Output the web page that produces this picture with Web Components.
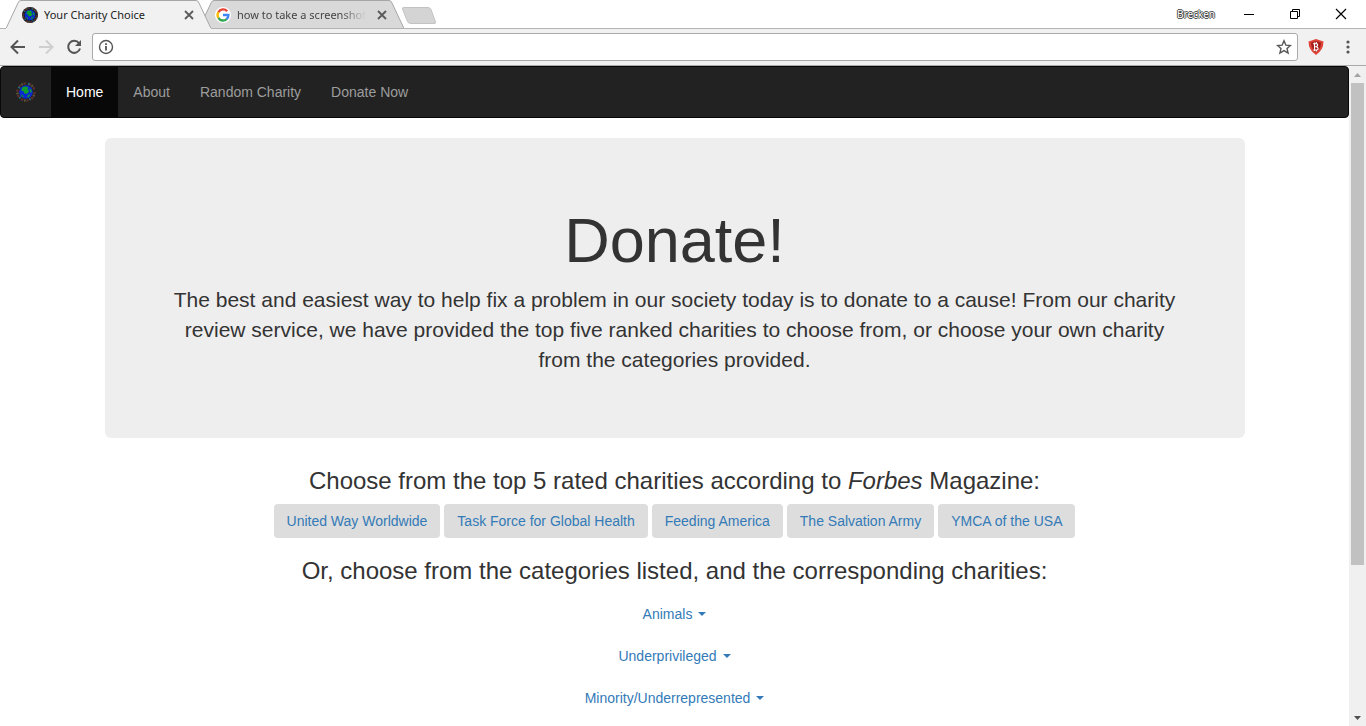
<!DOCTYPE html>
<html lang="en">
<head>
<meta charset="utf-8">
<title>Your Charity Choice</title>
<style>
html, body { margin: 0; height: 100%; }
body { overflow: hidden; background: #fff; }
em { font-style: italic; }
</style>
</head>
<body>
<browser-window>
  <browser-tab slot="tab" label="Your Charity Choice" active>
    <globe-icon></globe-icon>
  </browser-tab>
  <browser-tab slot="tab" label="how to take a screenshot">
    <google-icon></google-icon>
  </browser-tab>
  <browser-toolbar slot="toolbar"></browser-toolbar>

  <site-nav>
    <site-link href="#brand" brand><globe-icon large></globe-icon></site-link>
    <site-link href="#home" active>Home</site-link>
    <site-link href="#about">About</site-link>
    <site-link href="#random">Random Charity</site-link>
    <site-link href="#donate">Donate Now</site-link>
  </site-nav>
  <site-container>
    <site-jumbotron>
      <span slot="title">Donate!</span>
      The best and easiest way to help fix a problem in our society today is to donate to a cause! From our charity review service, we have provided the top five ranked charities to choose from, or choose your own charity from the categories provided.
    </site-jumbotron>
    <charity-section>
      <span slot="title">Choose from the top 5 rated charities according to <em>Forbes</em> Magazine:</span>
      <charity-link href="#united-way">United Way Worldwide</charity-link>
      <charity-link href="#task-force">Task Force for Global Health</charity-link>
      <charity-link href="#feeding-america">Feeding America</charity-link>
      <charity-link href="#salvation-army">The Salvation Army</charity-link>
      <charity-link href="#ymca">YMCA of the USA</charity-link>
    </charity-section>
    <charity-section stacked>
      <span slot="title">Or, choose from the categories listed, and the corresponding charities:</span>
      <category-menu>Animals</category-menu>
      <category-menu>Underprivileged</category-menu>
      <category-menu>Minority/Underrepresented</category-menu>
    </charity-section>
  </site-container>
</browser-window>

<script>
function define(name, html) {
  const template = document.createElement('template');
  template.innerHTML = html;
  customElements.define(name, class extends HTMLElement {
    constructor() {
      super();
      this.attachShadow({ mode: 'open' }).append(template.content.cloneNode(true));
    }
    connectedCallback() {
      const link = this.shadowRoot.querySelector('a');
      if (link && this.hasAttribute('href')) link.href = this.getAttribute('href');
      const label = this.shadowRoot.querySelector('.label');
      if (label && this.hasAttribute('label')) label.textContent = this.getAttribute('label');
    }
  });
}

define('globe-icon', `
<style>
:host { display: block; width: 16px; height: 16px; }
:host([large]) { width: 20px; height: 20px; }
svg { display: block; width: 100%; height: 100%; }
.halo { fill: #15191c; }
:host([large]) .halo { fill: none; }
</style>
<svg viewBox="0 0 20 20" aria-hidden="true">
  <circle class="halo" cx="10" cy="10" r="10"/>
  <g fill="none" stroke-width="2.4">
    <circle cx="10" cy="10" r="8.600" stroke="#5a2f2c" stroke-dasharray="2.400 3"/>
    <circle cx="10" cy="10" r="8.600" stroke="#5e5a3c" stroke-dasharray="1.600 9.200" stroke-dashoffset="-3"/>
    <circle cx="10" cy="10" r="8.200" stroke="#22707c" stroke-dasharray="1.400 9.400" stroke-dashoffset="-8"/>
  </g>
  <circle cx="10" cy="10" r="6.800" fill="#0a2ad0"/>
  <path d="M6 6Q7 4 10 4.500L12.500 5.500 11.500 7 13 9 12 11 9.500 12 8 11 7.500 9 5.500 9ZM13.500 6 15.500 8V11L14 10ZM12 13 14 12 13 15 11 15.500ZM5 12 7 13.500 7.500 15.500 6 14.500Z" fill="#0fa02c"/>
</svg>`);

define('google-icon', `
<style>
:host { display: block; width: 16px; height: 16px; background: #fff; border-radius: 50%; }
svg { display: block; }
</style>
<svg width="16" height="16" viewBox="0 0 16 16" fill="none" stroke-width="2.400" aria-hidden="true">
  <path d="M12.200 4.200A5.400 5.400 0 0 0 3.400 5.200" stroke="#ea4335"/>
  <path d="M3.400 5.200a5.400 5.400 0 0 0 0 5.600" stroke="#fbbc05"/>
  <path d="M3.400 10.800a5.400 5.400 0 0 0 8.400 1.200" stroke="#34a853"/>
  <path d="M11.600 12.200A5.400 5.400 0 0 0 13.400 8H8" stroke="#4285f4"/>
</svg>`);

define('browser-window', `
<style>
:host { display: flex; flex-direction: column; height: 100vh; font: 11px/16px "Noto Sans", "Open Sans", sans-serif; }
header { background: #f1f1f1; border-bottom: 1px solid #a9a9a9; }
.strip { display: flex; justify-content: space-between; height: 28px; background: #fff; border-bottom: 1px solid #b3b3b3; }
.tabs { display: flex; padding-left: 6px; }
.controls { display: flex; align-items: center; }
button { display: block; padding: 0; border: 0; background: none; font: inherit; }
.new { align-self: flex-start; margin: 6px 0 0 9px; }
.user { font-size: 10px; color: #fff; margin-right: 18px; text-shadow: 1px 0 #444, -1px 0 #444, 0 1px #444, 0 -1px #444; }
.win { width: 32px; height: 28px; margin-right: 14px; }
.win:last-child { margin-right: 9px; }
svg { display: block; margin: auto; }
.view { display: flex; flex: 1; min-height: 0; }
main { flex: 1; min-width: 0; overflow: hidden; }
</style>
<header>
  <div class="strip">
    <div class="tabs">
      <slot name="tab"></slot>
      <button class="new" aria-label="New tab"><svg width="36" height="19" viewBox="0 0 36 19"><path d="M2.500 1.500H27Q29 1.500 30 3.500L34.500 16Q35 17.500 33 17.500H9.500Q7.500 17.500 6.500 15.500L1.500 3Q1 1.500 2.500 1.500Z" fill="#d4d4d4" stroke="#c3c3c3"/></svg></button>
    </div>
    <div class="controls">
      <button class="user">Brecken</button>
      <button class="win" aria-label="Minimize"><svg width="12" height="12"><path d="M1 6.500H11" stroke="#000"/></svg></button>
      <button class="win" aria-label="Restore"><svg width="12" height="12" fill="none" stroke="#000"><path d="M1.500 3.500h7v7h-7zM3.500 3V1.500h7v7H9"/></svg></button>
      <button class="win" aria-label="Close"><svg width="12" height="12"><path d="M1 1 11 11M11 1 1 11" stroke="#000" stroke-width="1.200"/></svg></button>
    </div>
  </div>
  <slot name="toolbar"></slot>
</header>
<div class="view">
  <main><slot></slot></main>
  <scroll-track></scroll-track>
</div>`);

define('browser-tab', `
<style>
:host { display: grid; grid-template-columns: minmax(0, 1fr); flex: none; width: 205px; height: 29px; margin-right: -12px; --fill: #d9d9d9; }
:host([active]) { --fill: #f1f1f1; --base: #f1f1f1; position: relative; z-index: 1; }
svg.shape { grid-area: 1 / 1; display: block; width: 100%; height: 29px; }
.body { grid-area: 1 / 1; display: flex; align-items: center; height: 29px; padding: 0 16px; z-index: 1; }
.label { flex: 1; min-width: 0; margin: 0 10px 0 6px; padding: 0; border: 0; background: none; text-align: left; font: inherit; color: #222; white-space: nowrap; overflow: hidden; }
:host(:not([active])) .label { color: #444; -webkit-mask-image: linear-gradient(to right, #000 80%, transparent); mask-image: linear-gradient(to right, #000 80%, transparent); }
.close { display: block; padding: 0; border: 0; background: none; }
.close svg { display: block; }
</style>
<svg class="shape" viewBox="0 0 205 29" preserveAspectRatio="none" aria-hidden="true">
  <path d="M0 28.500 12 3Q13 .5 15 .5H190Q192 .5 193 3L205 28.500" fill="var(--fill)" stroke="#a6a6a6"/>
  <path d="M0 28.500H205" stroke="var(--base, #b3b3b3)"/>
</svg>
<div class="body">
  <slot></slot>
  <button class="label"></button>
  <button class="close" aria-label="Close tab"><svg width="12" height="12"><path d="M2 2 10 10M10 2 2 10" stroke="#5a5a5a" stroke-width="1.800"/></svg></button>
</div>`);

define('browser-toolbar', `
<style>
:host { display: flex; align-items: center; height: 36px; padding: 0 10px 0 8px; }
button { display: block; padding: 0; border: 0; background: none; }
svg { display: block; }
.nav { margin-right: 10px; }
.box { display: flex; align-items: center; flex: 1; height: 26px; padding: 0 5px; border: 1px solid #a9a9a9; border-radius: 3px; background: #fff; }
input { flex: 1; min-width: 0; margin: 0 6px; padding: 0; border: 0; outline: 0; background: none; font: inherit; }
.shield { margin: 0 16px 0 10px; }
</style>
<button class="nav" aria-label="Back"><svg width="18" height="18" fill="none" stroke="#555" stroke-width="2"><path d="M17 9H4M10 2.500 3.500 9 10 15.500"/></svg></button>
<button class="nav" aria-label="Forward"><svg width="18" height="18" fill="none" stroke="#cfcfcf" stroke-width="2"><path d="M3 9H16M10 2.500 16.500 9 10 15.500"/></svg></button>
<button class="nav" aria-label="Reload"><svg width="18" height="18" fill="none" stroke="#555" stroke-width="2"><path d="M15 5.200A6 6 0 1 0 16 10.500"/><path d="M17 2V8H11z" fill="#555" stroke="none"/></svg></button>
<div class="box">
  <button aria-label="Site information"><svg width="16" height="16" fill="none" stroke="#555"><circle cx="8" cy="8" r="6.500" stroke-width="1.400"/><path d="M8 7V11.500M8 4.300V6" stroke-width="1.800"/></svg></button>
  <input type="text" aria-label="Address">
  <button aria-label="Bookmark"><svg width="16" height="16" fill="none" stroke="#555" stroke-width="1.400"><path d="M8 1.800 9.900 6.200 14.500 6.500 11 9.600 12.100 14 8 11.600 3.900 14 5 9.600 1.500 6.500 6.100 6.200Z"/></svg></button>
</div>
<button class="shield" aria-label="Ad blocker"><svg width="16" height="16"><path d="M8 0 15.500 2.500Q15.500 11 8 16 .5 11 .5 2.500Z" fill="#e0453a"/><path d="M8 2 13 3.600Q13 10 8 13.500 3 10 3 3.600Z" fill="#a3201a"/><path d="M6.500 3.500V12M5 4.700H9Q10.500 6 8.500 7.700H6.500M8.500 7.700Q11.500 9.500 9 11H5.500M8.300 3V5M8.300 11V12.500" fill="none" stroke="#fff" stroke-width="1.100"/></svg></button>
<button aria-label="Menu"><svg width="16" height="16" fill="#555"><circle cx="8" cy="3" r="1.600"/><circle cx="8" cy="8" r="1.600"/><circle cx="8" cy="13" r="1.600"/></svg></button>`);

define('scroll-track', `
<style>
:host { display: flex; flex-direction: column; width: 17px; background: #f0f0f0; }
button { display: block; flex: none; height: 17px; padding: 0; border: 0; background: none; }
svg { display: block; margin: auto; }
.track { flex: 1; padding: 0 2px; }
.thumb { height: 77%; background: #c1c1c1; }
</style>
<button aria-label="Scroll up"><svg width="7" height="4"><path d="M0 4 3.500 0 7 4z" fill="#a3a3a3"/></svg></button>
<div class="track"><div class="thumb"></div></div>
<button aria-label="Scroll down"><svg width="7" height="4"><path d="M0 0 3.500 4 7 0z" fill="#505050"/></svg></button>`);

define('site-nav', `
<style>
:host { display: block; font: 14px/20px "Liberation Sans", Arial, sans-serif; }
nav { display: flex; min-height: 50px; margin-bottom: 20px; background: #222; border: 1px solid #080808; border-radius: 4px; }
</style>
<nav><slot></slot></nav>`);

define('site-link', `
<style>
:host { display: block; }
a { display: block; padding: 15px; color: #9d9d9d; text-decoration: none; }
:host([active]) a { background: #080808; color: #fff; }
</style>
<a><slot></slot></a>`);

define('site-container', `
<style>
:host { display: block; max-width: 1140px; margin: 0 auto; padding: 0 15px; font: 14px/20px "Liberation Sans", Arial, sans-serif; color: #333; text-align: center; }
</style>
<slot></slot>`);

define('site-jumbotron', `
<style>
:host { display: block; padding: 68px 60px 63px; margin-bottom: 30px; border-radius: 6px; background: #eee; }
h1 { margin: 0 0 10px; font-size: 63px; line-height: 69px; font-weight: 500; }
p { margin: 0; font-size: 21px; line-height: 30px; }
</style>
<h1><slot name="title"></slot></h1>
<p><slot></slot></p>`);

define('charity-section', `
<style>
:host { display: block; margin-bottom: 20px; }
h3 { margin: 0 0 10px; font-size: 24px; line-height: 26px; font-weight: 500; }
.items { display: flex; flex-wrap: wrap; justify-content: center; gap: 4px; }
:host([stacked]) .items { flex-direction: column; align-items: stretch; gap: 2px; }
</style>
<h3><slot name="title"></slot></h3>
<div class="items"><slot></slot></div>`);

define('charity-link', `
<style>
:host { display: block; }
a { display: block; padding: 7px 13px; border-radius: 4px; background: #ddd; color: #337ab7; text-decoration: none; white-space: nowrap; }
</style>
<a><slot></slot></a>`);

define('category-menu', `
<style>
:host { display: block; }
button { display: flex; align-items: center; justify-content: center; gap: 6px; width: 100%; padding: 10px 15px; border: 0; background: none; color: #337ab7; font: inherit; }
i { border: 4px solid transparent; border-top-color: currentColor; border-bottom: 0; }
</style>
<button aria-haspopup="true" aria-expanded="false"><slot></slot><i></i></button>`);
</script>
</body>
</html>
